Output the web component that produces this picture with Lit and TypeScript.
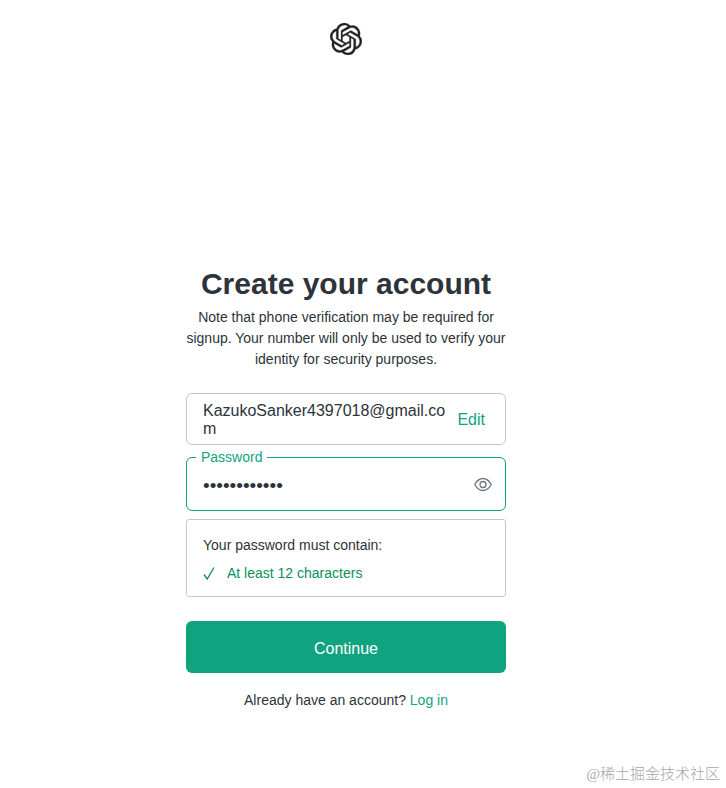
import { LitElement, html, css, svg } from "lit";
import { customElement, state } from "lit/decorators.js";

const knot = svg`<path fill="currentColor" stroke="currentColor" stroke-width=".25" d="M22.2819 9.8211a5.9847 5.9847 0 0 0-.5157-4.9108 6.0462 6.0462 0 0 0-6.5098-2.9A6.0651 6.0651 0 0 0 4.9807 4.1818a5.9847 5.9847 0 0 0-3.9977 2.9 6.0462 6.0462 0 0 0 .7427 7.0966 5.98 5.98 0 0 0 .511 4.9107 6.051 6.051 0 0 0 6.5146 2.9001A5.9847 5.9847 0 0 0 13.2599 24a6.0557 6.0557 0 0 0 5.7718-4.2058 5.9894 5.9894 0 0 0 3.9977-2.9001 6.0557 6.0557 0 0 0-.7475-7.0729zm-9.022 12.6081a4.4755 4.4755 0 0 1-2.8764-1.0408l.1419-.0804 4.7783-2.7582a.7948.7948 0 0 0 .3927-.6813v-6.7369l2.02 1.1686a.071.071 0 0 1 .038.052v5.5826a4.504 4.504 0 0 1-4.4945 4.4944zm-9.6607-4.1254a4.4708 4.4708 0 0 1-.5346-3.0137l.142.0852 4.783 2.7582a.7712.7712 0 0 0 .7806 0l5.8428-3.3685v2.3324a.0804.0804 0 0 1-.0332.0615L9.74 19.9502a4.4992 4.4992 0 0 1-6.1408-1.6464zM2.3408 7.8956a4.485 4.485 0 0 1 2.3655-1.9728V11.6a.7664.7664 0 0 0 .3879.6765l5.8144 3.3543-2.0201 1.1685a.0757.0757 0 0 1-.071 0l-4.8303-2.7865A4.504 4.504 0 0 1 2.3408 7.872zm16.5963 3.8558L13.1038 8.364 15.1192 7.2a.0757.0757 0 0 1 .071 0l4.8303 2.7913a4.4944 4.4944 0 0 1-.6765 8.1042v-5.6772a.79.79 0 0 0-.407-.667zm2.0107-3.0231l-.142-.0852-4.7735-2.7818a.7759.7759 0 0 0-.7854 0L9.409 9.2297V6.8974a.0662.0662 0 0 1 .0284-.0615l4.8303-2.7866a4.4992 4.4992 0 0 1 6.6802 4.66zM8.3065 12.863l-2.02-1.1638a.0804.0804 0 0 1-.038-.0567V6.0742a4.4992 4.4992 0 0 1 7.3757-3.4537l-.142.0805L8.704 5.459a.7948.7948 0 0 0-.3927.6813zm1.0976-2.3654l2.602-1.4998 2.6069 1.4998v2.9994l-2.5974 1.4997-2.6067-1.4997Z"/>`;

@customElement("app-root")
export class AppRoot extends LitElement {
  @state() private reveal = false;

  static styles = css`
    :host {
      display: block;
      font-family: "Liberation Sans", Arial, sans-serif;
      font-size: 14px;
      line-height: 21px;
      color: #2d333a;
      background: #fff;
    }
    * { box-sizing: border-box; }
    .page {
      min-height: 100vh;
      padding: 23px 34px 0 0;
      display: flex;
      flex-direction: column;
      align-items: center;
    }
    .logo { width: 32px; height: 32px; color: #202123; display: block; }
    main { width: 100%; max-width: 320px; margin-top: 208px; text-align: center; }
    h1 { margin: 0; font-size: 30px; line-height: 42px; font-weight: 700; white-space: nowrap; }
    p { margin: 0; }
    .note { margin-top: 2px; }
    form { margin-top: 23px; }
    .field {
      position: relative;
      display: flex;
      align-items: center;
      border: 1px solid #c2c8d0;
      border-radius: 6px;
      padding: 0 20px 0 16px;
      height: 52px;
    }
    textarea, input {
      flex: 1;
      min-width: 0;
      border: 0;
      outline: 0;
      padding: 0;
      margin: 0;
      background: none;
      color: inherit;
      font: inherit;
      font-size: 16px;
      line-height: 18px;
    }
    textarea { height: 38px; padding-top: 2px; resize: none; overflow: hidden; word-break: break-all; }
    input { font-size: 19px; padding-top: 4px; }
    a { color: #10a37f; text-decoration: none; }
    .edit { font-size: 16px; margin-left: 12px; }
    .password { margin-top: 12px; height: 54px; border-color: #10a37f; padding-right: 13px; }
    .password label {
      position: absolute;
      top: -11px;
      left: 9px;
      padding: 0 5px;
      background: #fff;
      color: #10a37f;
    }
    .eye { border: 0; padding: 0; background: none; color: #6e7680; height: 20px; }
    .eye svg { display: block; width: 18px; height: 20px; }
    .rules {
      margin-top: 8px;
      border: 1px solid #c2c8d0;
      border-radius: 3px;
      padding: 15px 16px 12px;
      text-align: left;
    }
    .rules ul { list-style: none; margin: 7px 0 0; padding: 0; }
    .rules li { display: flex; align-items: center; gap: 12px; color: #0a8f5c; }
    .rules svg { width: 12px; height: 16px; }
    .go {
      display: block;
      width: 100%;
      height: 52px;
      margin-top: 24px;
      border: 0;
      border-radius: 6px;
      padding: 2px 0 0;
      background: #10a37f;
      color: #fff;
      font: inherit;
      font-size: 16px;
    }
    .alt { margin-top: 17px; }
    .mark {
      position: absolute;
      right: 6px;
      bottom: 3px;
      font-family: "Liberation Serif", "Noto Sans CJK SC", serif;
      font-size: 15px;
      font-weight: 300;
      color: #a8a8a8;
    }
  `;

  render() {
    return html`
      <div class="page">
        <svg class="logo" viewBox="0 0 24 24" role="img" aria-label="OpenAI">${knot}</svg>
        <main>
          <h1>Create your account</h1>
          <p class="note">Note that phone verification may be required for signup. Your number will only be used to verify your identity for security purposes.</p>
          <form @submit=${(e: Event) => e.preventDefault()}>
            <div class="field">
              <textarea readonly rows="2" aria-label="Email address" .value=${"KazukoSanker4397018@gmail.com"}></textarea>
              <a class="edit" href="#edit">Edit</a>
            </div>
            <div class="field password">
              <label for="password">Password</label>
              <input id="password" type=${this.reveal ? "text" : "password"} .value=${"abcdefghijkl"} />
              <button class="eye" type="button" aria-label="Show password" @click=${() => (this.reveal = !this.reveal)}>
                <svg viewBox="0 0 18 20" fill="none" stroke="currentColor" stroke-width="1.3">
                  <path d="M.8 10.500C3 6.500 5.700 4.500 9 4.500S15 6.500 17.200 10.500C15 14.500 12.300 16.500 9 16.500S3 14.500.8 10.500Z" stroke-linejoin="round" />
                  <circle cx="9" cy="10.500" r="3" />
                </svg>
              </button>
            </div>
            <div class="rules">
              <p>Your password must contain:</p>
              <ul>
                <li>
                  <svg viewBox="0 0 12 16" fill="none" stroke="currentColor" stroke-width="1.3" aria-hidden="true"><path d="M1 8.500 4.200 13 11 1.500" /></svg>
                  At least 12 characters
                </li>
              </ul>
            </div>
            <button class="go" type="submit">Continue</button>
          </form>
          <p class="alt">Already have an account? <a href="#login">Log in</a></p>
        </main>
      </div>
      <div class="mark">@稀土掘金技术社区</div>
    `;
  }
}
